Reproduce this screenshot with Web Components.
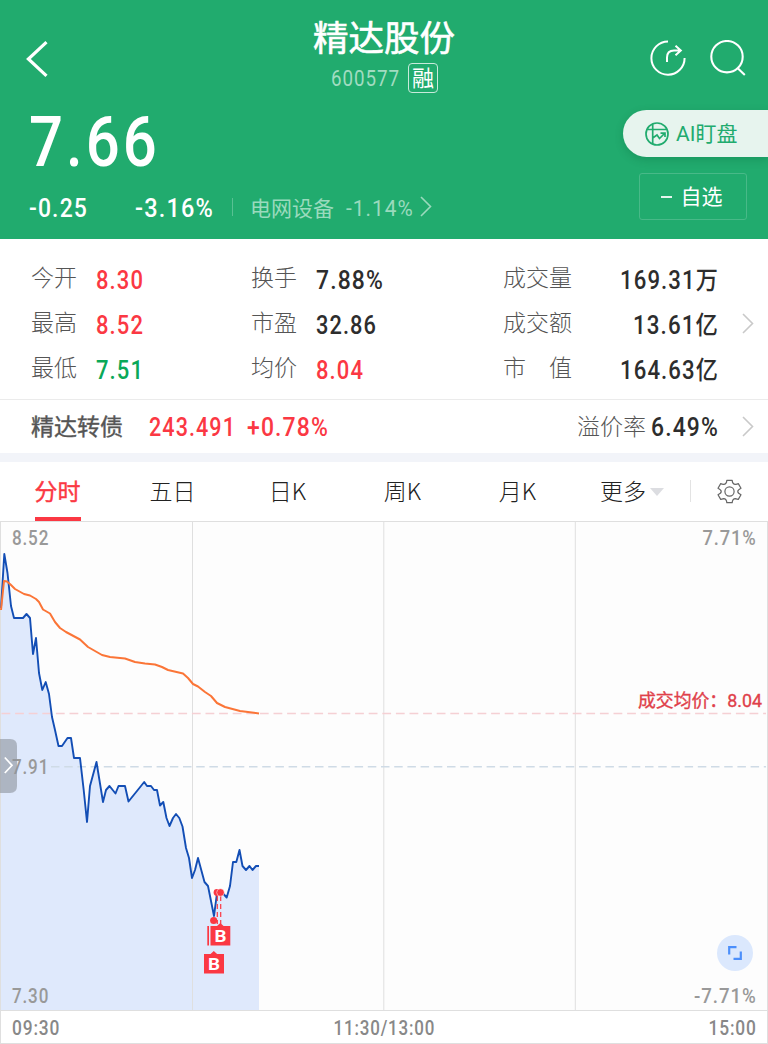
<!DOCTYPE html>
<html lang="zh-CN">
<head>
<meta charset="utf-8">
<title>精达股份 600577</title>
<style>
body{
    margin: 0;
    background: #ffffff;
    font-family: Roboto, "Noto Sans CJK SC", sans-serif;
}
</style>
</head>
<body>
<stock-page></stock-page>

<script>
// Single line of figures set to an exact width; the box is as high as the capitals
class FitText extends HTMLElement{

    constructor(){
        super();
        this.attachShadow({mode: 'open'});
    }

    connectedCallback(){
        const size = Number(this.getAttribute('size') || 25);
        const width = Number(this.getAttribute('width'));
        const weight = this.getAttribute('weight') || 500;
        const height = Math.round(size * 0.711);
        // the last letter space hangs out of the box
        const spacing = size * 0.05;

        this.shadowRoot.innerHTML = `
<style>
:host{
    display: block;
    flex: none;
}

svg{
    display: block;
    overflow: visible;
}

text{
    fill: currentColor;
    font-family: Roboto, "Noto Sans CJK SC", sans-serif;
    letter-spacing: ${spacing}px;
}
</style>
<svg width="${width}" height="${height}"><text x="0" y="${height}" font-size="${size}" font-weight="${weight}" textLength="${width + spacing * 0.8}" lengthAdjust="spacingAndGlyphs">${this.getAttribute('text')}</text></svg>
`;
    }

}

customElements.define('fit-text', FitText);


class ArrowIcon extends HTMLElement{

    constructor(){
        super();
        this.attachShadow({mode: 'open'});
        this.shadowRoot.innerHTML = `
<style>
:host{
    display: block;
    flex: none;
}

svg{
    display: block;
}
</style>
<svg width="12" height="21" viewBox="0 0 12 21" fill="none" stroke="currentColor" stroke-width="1.6"><path d="M1 1 L10.5 10.5 L1 20"/></svg>
`;
    }

}

customElements.define('arrow-icon', ArrowIcon);


const headerTemplate = document.createElement('template');

headerTemplate.innerHTML = `
<style>
:host{
    display: block;
    box-sizing: border-box;
    height: 239px;
    background: #21ab6e;
    color: #ffffff;
    overflow: hidden;
}

svg{
    display: block;
}

.nav{
    display: grid;
    grid-template-columns: 1fr auto 1fr;
    height: 110px;
}

.back{
    padding: 41px 0 0 26px;
}

.title{
    display: flex;
    flex-direction: column;
    align-items: center;
}

.name{
    padding-top: 15px;
    font-size: 35.5px;
    line-height: 48px;
    height: 48px;
    -webkit-text-stroke: 0.6px currentColor;
}

.code{
    display: flex;
    align-items: center;
    gap: 9px;
    height: 30px;
    margin-left: 1px;
    color: #a1dcc1;
}

.badge{
    box-sizing: border-box;
    width: 30px;
    height: 30px;
    border: 1.5px solid #c8eadb;
    border-radius: 4px;
    color: #ffffff;
    font-size: 22px;
    line-height: 29px;
    text-align: center;
}

.actions{
    display: flex;
    justify-content: flex-end;
    gap: 24px;
    padding: 40px 22px 0 0;
}

.body{
    display: flex;
    justify-content: space-between;
}

.price{
    padding: 6px 0 0 29px;
}

.change{
    display: flex;
    align-items: center;
    margin-top: 28px;
    height: 28px;
}

.pct{
    margin-left: 48px;
}

.bar{
    width: 1px;
    height: 18px;
    margin: -2px 18px 0 19px;
    background: #58c193;
}

.sector{
    display: flex;
    align-items: center;
    gap: 12px;
    margin-left: -1px;
    color: #9adabd;
    font-size: 21px;
}

.sector span{
    margin-top: -3px;
}

.sector arrow-icon{
    margin: -4px 0 0 -5px;
}

.side{
    display: flex;
    flex-direction: column;
    align-items: flex-end;
}

.ai{
    display: flex;
    align-items: center;
    box-sizing: border-box;
    width: 145px;
    height: 47px;
    padding-left: 22px;
    gap: 7px;
    border-radius: 24px 0 0 24px;
    background: #e7f4ee;
    box-shadow: 0 3px 8px rgba(0, 80, 45, 0.22);
    color: #21ab6e;
    font-size: 21px;
}

.ai span, .watch span{
    margin-top: -4px;
}

.watch{
    display: flex;
    align-items: center;
    justify-content: center;
    box-sizing: border-box;
    width: 108px;
    height: 47px;
    margin: 16px 21px 0 0;
    padding-right: 3px;
    gap: 9px;
    border: 1px solid #48b988;
    border-radius: 3px;
    font-size: 21px;
}
</style>

<div class="nav">
    <div class="back">
        <svg width="23" height="36" viewBox="0 0 23 36" fill="none" stroke="#fff" stroke-width="3.2"><path d="M20.5 1.2 L2.4 18 L20.5 34.8"/></svg>
    </div>
    <div class="title">
        <span class="name">精达股份</span>
        <div class="code">
            <fit-text text="600577" size="22.5" width="68" weight="400"></fit-text>
            <span class="badge">融</span>
        </div>
    </div>
    <div class="actions">
        <svg width="36" height="36" viewBox="0 0 36 36" fill="none" stroke="#fff" stroke-width="2">
            <path d="M18 1.5 A16.6 16.6 0 1 0 34.6 18"/>
            <path d="M17 22 V17.5 Q17 10.5 24 10.5 H30.5 M25.5 5.8 L30.8 10.5 L25.5 15.3"/>
        </svg>
        <svg width="36" height="36" viewBox="0 0 36 36" fill="none" stroke="#fff" stroke-width="2.1">
            <circle cx="17" cy="16.7" r="15.7"/>
            <path d="M27.5 28 L34.8 35"/>
        </svg>
    </div>
</div>
<div class="body">
    <div>
        <div class="price"><fit-text text="7.66" size="70" width="128" weight="500"></fit-text></div>
        <div class="change">
            <fit-text style="margin-left:29px" text="-0.25" size="25" width="58"></fit-text>
            <fit-text class="pct" text="-3.16%" size="25" width="78"></fit-text>
            <span class="bar"></span>
            <div class="sector">
                <span>电网设备</span>
                <fit-text text="-1.14%" size="22.5" width="67" weight="400"></fit-text>
                <arrow-icon></arrow-icon>
            </div>
        </div>
    </div>
    <div class="side">
        <div class="ai">
            <svg width="24" height="24" viewBox="0 0 24 24" fill="none" stroke="#21ab6e" stroke-width="1.7">
                <circle cx="12" cy="12" r="11"/>
                <path d="M7.7 2 V22 M2 7.5 H22 M7.7 16 L12 13 L14.5 16.5 L19.5 11.5 M15.5 11.2 H20 V15"/>
            </svg>
            <span>AI盯盘</span>
        </div>
        <div class="watch">
            <svg width="11" height="2"><rect width="11" height="2" fill="#e4f5ed"/></svg>
            <span>自选</span>
        </div>
    </div>
</div>
`;

class StockHeader extends HTMLElement{

    constructor(){
        super();
        this.attachShadow({mode: 'open'});
        this.shadowRoot.appendChild(headerTemplate.content.cloneNode(true));
    }

}

customElements.define('stock-header', StockHeader);


const statsTemplate = document.createElement('template');

statsTemplate.innerHTML = `
<style>
:host{
    display: flex;
    box-sizing: border-box;
    height: 161px;
    padding: 18px 14px 0 31px;
    border-bottom: 1px solid #ebebeb;
    color: #2d2d2d;
}

.col{
    display: flex;
    flex-direction: column;
}

.first{
    width: 220px;
}

.second{
    width: 252px;
}

.third{
    width: 215px;
}

.row{
    display: flex;
    align-items: center;
    height: 45px;
}

.label{
    flex: none;
    width: 65px;
    margin-top: -8px;
    color: #555555;
    font-size: 23px;
    font-weight: 300;
    white-space: pre;
}

.third .row{
    justify-content: space-between;
}

.third .label{
    width: 70px;
}

.up{
    color: #fb3843;
}

.down{
    color: #0aa858;
}

arrow-icon{
    margin: 56px 0 0 auto;
    color: #c9c9c9;
}
</style>

<div class="col first">
    <div class="row"><span class="label">今开</span><fit-text class="up" text="8.30" width="47"></fit-text></div>
    <div class="row"><span class="label">最高</span><fit-text class="up" text="8.52" width="47"></fit-text></div>
    <div class="row"><span class="label">最低</span><fit-text class="down" text="7.51" width="47"></fit-text></div>
</div>
<div class="col second">
    <div class="row"><span class="label">换手</span><fit-text text="7.88%" width="67"></fit-text></div>
    <div class="row"><span class="label">市盈</span><fit-text text="32.86" width="60"></fit-text></div>
    <div class="row"><span class="label">均价</span><fit-text class="up" text="8.04" width="47"></fit-text></div>
</div>
<div class="col third">
    <div class="row"><span class="label">成交量</span><fit-text text="169.31万" width="98"></fit-text></div>
    <div class="row"><span class="label">成交额</span><fit-text text="13.61亿" width="85"></fit-text></div>
    <div class="row"><span class="label">市　值</span><fit-text text="164.63亿" width="98"></fit-text></div>
</div>
<arrow-icon></arrow-icon>
`;

class StockStats extends HTMLElement{

    constructor(){
        super();
        this.attachShadow({mode: 'open'});
        this.shadowRoot.appendChild(statsTemplate.content.cloneNode(true));
    }

}

customElements.define('stock-stats', StockStats);


const bondTemplate = document.createElement('template');

bondTemplate.innerHTML = `
<style>
:host{
    display: flex;
    align-items: center;
    box-sizing: border-box;
    height: 62px;
    padding: 0 14px 0 31px;
    border-bottom: 9px solid #f2f4f9;
    color: #fb3843;
    font-size: 23px;
}

.name{
    width: 118px;
    margin-top: -4px;
    color: #555555;
    -webkit-text-stroke: 0.4px currentColor;
}

fit-text{
    margin-top: 1px;
}

.change{
    margin-left: 12px;
}

.label{
    margin: -4px 5px 0 auto;
    color: #555555;
    font-weight: 300;
}

.rate{
    margin-right: 24px;
    color: #2d2d2d;
}

arrow-icon{
    color: #c9c9c9;
}
</style>

<span class="name">精达转债</span>
<fit-text text="243.491" width="86"></fit-text>
<fit-text class="change" text="+0.78%" width="81"></fit-text>
<span class="label">溢价率</span>
<fit-text class="rate" text="6.49%" width="67"></fit-text>
<arrow-icon></arrow-icon>
`;

class BondRow extends HTMLElement{

    constructor(){
        super();
        this.attachShadow({mode: 'open'});
        this.shadowRoot.appendChild(bondTemplate.content.cloneNode(true));
    }

}

customElements.define('bond-row', BondRow);


const tabsTemplate = document.createElement('template');

tabsTemplate.innerHTML = `
<style>
:host{
    display: flex;
    height: 59px;
    color: #222222;
    font-family: "Noto Sans CJK SC", sans-serif;
    font-size: 23px;
    font-weight: 300;
    line-height: 56px;
}

.tab{
    display: flex;
    justify-content: center;
    width: 115px;
}

.active{
    color: #fb3843;
    font-weight: 400;
    -webkit-text-stroke: 0.4px currentColor;
}

.active span{
    box-sizing: border-box;
    height: 59px;
    border-bottom: 4px solid #fb3843;
}

.more{
    display: flex;
    gap: 4px;
    padding-left: 25px;
}

.more svg{
    margin-top: 26px;
}

.line{
    width: 1px;
    height: 22px;
    margin: 18px 26px 0;
    background: #e3e3e3;
}

.gear{
    margin-top: 17px;
}

svg{
    display: block;
}
</style>

<div class="tab active"><span>分时</span></div>
<div class="tab"><span>五日</span></div>
<div class="tab"><span>日K</span></div>
<div class="tab"><span>周K</span></div>
<div class="tab"><span>月K</span></div>
<div class="more"><span>更多</span><svg width="14" height="8"><path d="M0 0 H14 L7 8 Z" fill="#dcdde1"/></svg></div>
<div class="line"></div>
<div class="gear">
    <svg width="25" height="25" viewBox="0 0 25 25" fill="none" stroke="#666" stroke-width="1.2" stroke-linejoin="round">
        <path d="M9.8 1.4 H15.2 Q15.4 5.2 18.4 5.4 Q20.2 5 21.3 4.6 L24 9.3 Q20.6 11 20.8 12.5 Q20.6 14 24 15.7 L21.3 20.4 Q20.2 20 18.4 19.6 Q15.4 19.8 15.2 23.6 H9.8 Q9.6 19.8 6.6 19.6 Q4.8 20 3.7 20.4 L1 15.7 Q4.4 14 4.2 12.5 Q4.4 11 1 9.3 L3.7 4.6 Q4.8 5 6.6 5.4 Q9.6 5.2 9.8 1.4 Z"/>
        <circle cx="12.5" cy="12.5" r="4.6"/>
    </svg>
</div>
`;

class ChartTabs extends HTMLElement{

    constructor(){
        super();
        this.attachShadow({mode: 'open'});
        this.shadowRoot.appendChild(tabsTemplate.content.cloneNode(true));
    }

}

customElements.define('chart-tabs', ChartTabs);


const pricePoints = '1,608 4.3,554 7.5,573 11,606 14,618 23,618 26.5,614 30,618 33,654 36,638 39,673 42.3,690 45.7,682 49,694 52,717 55,730 58.5,746 62,746 67.5,738 71,738 74,758 80,758 83.7,790 87,822 90,786 96.5,762 103,802 106,790 109.5,786 115.5,793.5 118.5,786 125,786 128.5,801.5 144.2,782 147,786 151,786 154,790 157,790 160,805.5 163.3,802 166.5,818 169.5,826 173,818 176,814 179.3,818 182.5,826.5 186,848 189,858 192,878 195,870 198,858 204.5,882 208,886 214,916 217,893 220,892 223.5,894 226.7,897.5 230,886 233,862 236.3,862 239.5,850 242.5,866 246,870 249.5,866 252.5,870 256,866 259,866';

const averagePoints = '1,610 4,581 7,581.5 10.5,584.5 15,589 24,594 30,595.5 36,599 39,602 43,609.5 50,613.5 55,622 60,628 66,632 80,639.5 88,647 102,655 110,657 125,658.5 135,662 145,663.5 155,664.5 162,667 168,670 183,673.5 188,678 193,684 198,686.5 205,692 211,696 217,703 225,707 240,711 259,713.5';

const chartTemplate = document.createElement('template');

chartTemplate.innerHTML = `
<style>
:host{
    display: block;
    position: relative;
    height: 523px;
}

svg{
    display: block;
}

text{
    font-family: Roboto, "Noto Sans CJK SC", sans-serif;
    font-size: 20.5px;
    font-weight: 500;
    fill: #999999;
}

.axis{
    letter-spacing: 1px;
}

.time{
    fill: #888888;
}

.mark{
    font-size: 17px;
    font-weight: 700;
    fill: #ffffff;
}

.average{
    font-size: 18.3px;
    font-weight: 400;
    fill: #e0404a;
    stroke: #e0404a;
    stroke-width: 0.35px;
}

.handle{
    position: absolute;
    left: 0;
    top: 218px;
    width: 17px;
    height: 54px;
}

.expand{
    position: absolute;
    right: 15px;
    top: 414px;
    width: 36px;
    height: 36px;
}
</style>

<svg class="plot" width="768" height="523" viewBox="0 521 768 523">
    <rect x="0" y="521" width="768" height="489" fill="#fdfdfd"/>
    <polygon points="${pricePoints} 259,1010 1,1010" fill="#dfe9fc"/>
    <path d="M0 521.5 H768 M0 1010.5 H768 M0 1043.5 H768 M.5 521 V1044 M192.5 521 V1010 M383.8 521 V1010 M575.3 521 V1010 M767.5 521 V1044" stroke="#dfdfdf" fill="none"/>
    <path d="M1.5 713.5 H766" stroke="#f5d0d4" stroke-width="1.5" stroke-dasharray="8.8 4.8"/>
    <path d="M51 766.8 H766" stroke="#cfdbe6" stroke-width="1.5" stroke-dasharray="8.5 4.7"/>
    <polyline points="${pricePoints}" fill="none" stroke="#134eb5" stroke-width="1.9" stroke-linejoin="round"/>
    <polyline points="${averagePoints}" fill="none" stroke="#fb7537" stroke-width="2" stroke-linejoin="round"/>

    <g stroke="#fb3843" stroke-width="1.2" stroke-dasharray="5 3">
        <path d="M217.3 896 V924"/>
        <path d="M220.7 896 V924"/>
    </g>
    <g fill="#fb3843">
        <circle cx="217" cy="892.5" r="3.4"/>
        <circle cx="220.5" cy="892.5" r="3.8" stroke="#fff" stroke-width=".5"/>
        <circle cx="213.7" cy="920.5" r="3.6"/>
        <path d="M207.3 926 H209 V945.5 H207.3 Z"/>
        <path d="M210.5 926 H217 L220.3 923 L223.6 926 H230.3 V945.5 H210.5 Z"/>
        <path d="M204 954 H210.5 L213.8 951 L217.1 954 H224 V973.5 H204 Z"/>
    </g>
    <text class="mark" x="214.6" y="942" textLength="12" lengthAdjust="spacingAndGlyphs">B</text>
    <text class="mark" x="208.1" y="970" textLength="12" lengthAdjust="spacingAndGlyphs">B</text>

    <g class="axis">
        <text x="12" y="545" textLength="37.2" lengthAdjust="spacingAndGlyphs">8.52</text>
        <text x="702.5" y="545" textLength="54.2" lengthAdjust="spacingAndGlyphs">7.71%</text>
        <text x="12" y="774" textLength="37.2" lengthAdjust="spacingAndGlyphs">7.91</text>
        <text x="12" y="1002.5" textLength="37.2" lengthAdjust="spacingAndGlyphs">7.30</text>
        <text x="694" y="1002.5" textLength="62.7" lengthAdjust="spacingAndGlyphs">-7.71%</text>
        <text class="time" x="12" y="1035" textLength="48.2" lengthAdjust="spacingAndGlyphs">09:30</text>
        <text class="time" x="333.5" y="1035" textLength="101.7" lengthAdjust="spacingAndGlyphs">11:30/13:00</text>
        <text class="time" x="708.5" y="1035" textLength="48.2" lengthAdjust="spacingAndGlyphs">15:00</text>
    </g>
    <text class="average" x="638" y="706.5" textLength="124" lengthAdjust="spacingAndGlyphs">成交均价：8.04</text>
</svg>
<svg class="handle" viewBox="0 0 17 54">
    <path d="M0 0 H10 Q17 0 17 7 V47 Q17 54 10 54 H0 Z" fill="#8e949e" fill-opacity=".62"/>
    <path d="M4.8 18.5 L12 26.3 L4.8 34" fill="none" stroke="#fff" stroke-width="1.7"/>
</svg>
<svg class="expand" viewBox="0 0 36 36">
    <circle cx="18" cy="18" r="18" fill="#dbe8fd"/>
    <path d="M12.2 19.5 V12.2 H19.5 M23.8 16.5 V23.8 H16.5" fill="none" stroke="#4c8ffb" stroke-width="2.2"/>
</svg>
`;

class MinuteChart extends HTMLElement{

    constructor(){
        super();
        this.attachShadow({mode: 'open'});
        this.shadowRoot.appendChild(chartTemplate.content.cloneNode(true));
    }

}

customElements.define('minute-chart', MinuteChart);


const pageTemplate = document.createElement('template');

pageTemplate.innerHTML = `
<style>
:host{
    display: flex;
    flex-direction: column;
    width: 768px;
    height: 1044px;
    overflow: hidden;
}
</style>

<stock-header></stock-header>
<stock-stats></stock-stats>
<bond-row></bond-row>
<chart-tabs></chart-tabs>
<minute-chart></minute-chart>
`;

class StockPage extends HTMLElement{

    constructor(){
        super();
        this.attachShadow({mode: 'open'});
        this.shadowRoot.appendChild(pageTemplate.content.cloneNode(true));
    }

}

customElements.define('stock-page', StockPage);
</script>
</body>
</html>
